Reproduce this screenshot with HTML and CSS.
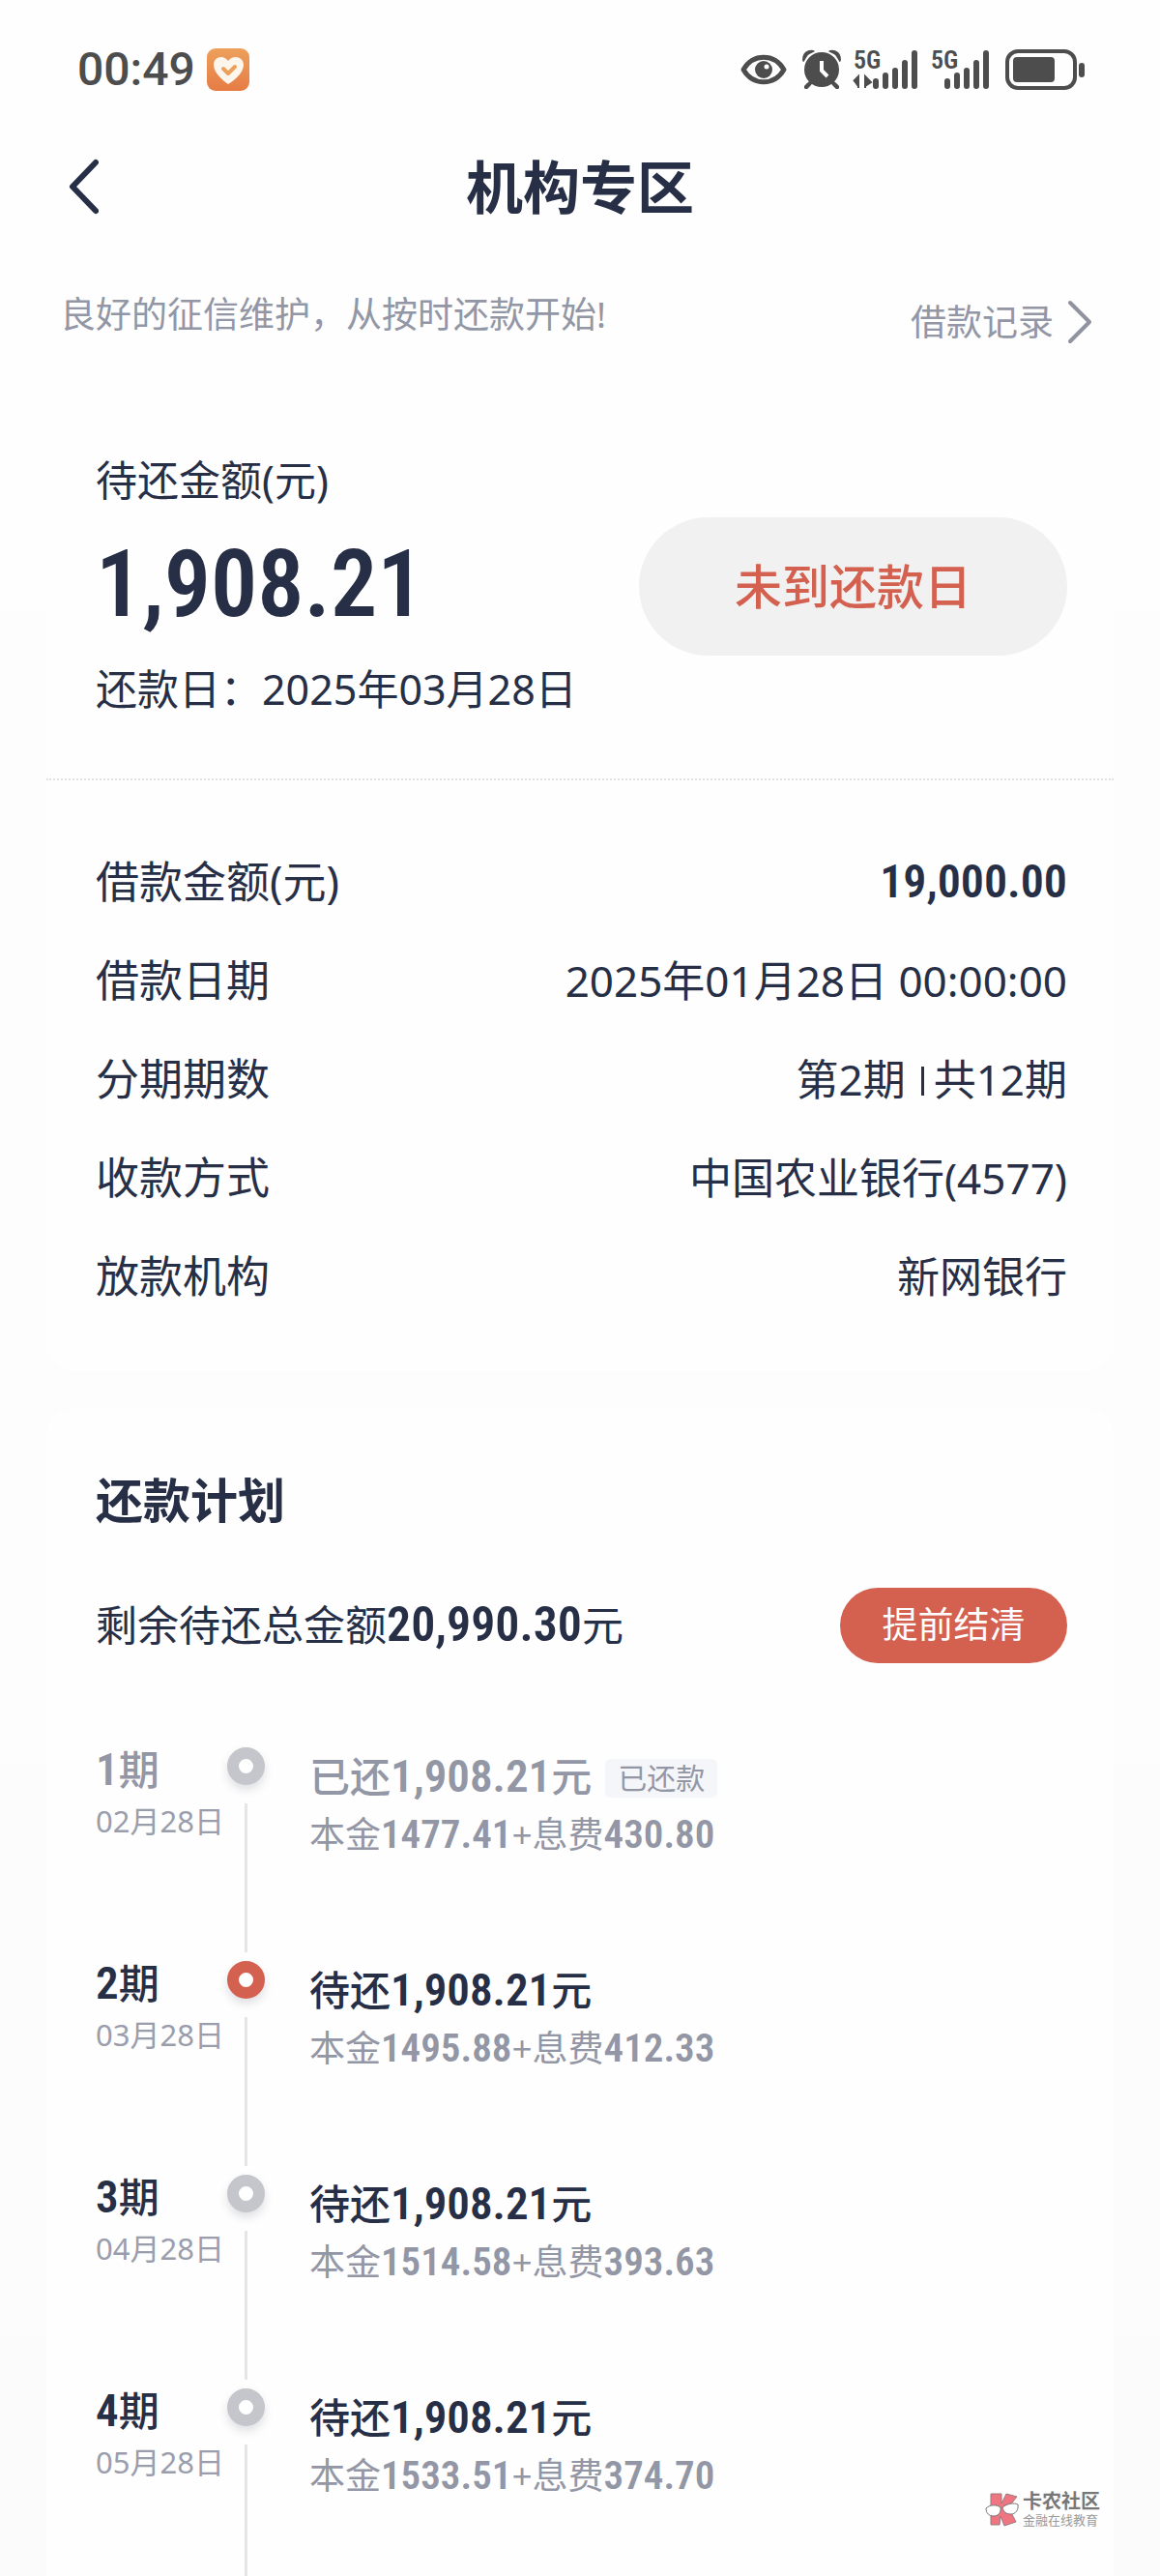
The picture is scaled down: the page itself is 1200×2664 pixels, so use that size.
FILE: index.html
```html
<!DOCTYPE html>
<html lang="zh-CN">
<head>
    <meta charset="UTF-8">
    <meta name="viewport" content="width=device-width, initial-scale=1.0">
    <title>机构专区</title>
    <link rel="stylesheet" href="styles.css">
</head>
<body>
    <div class="status-bar">
        <span class="time">00:49</span>
        <svg class="app-icon" width="44" height="44" viewBox="0 0 44 44">
            <defs>
                <linearGradient id="appBg" x1="0" y1="0" x2="0" y2="1">
                    <stop offset="0" stop-color="#eda05c"/>
                    <stop offset="1" stop-color="#e67c45"/>
                </linearGradient>
            </defs>
            <rect width="44" height="44" rx="9" fill="url(#appBg)"/>
            <path d="M22 37C18 34 7 26 7 17C7 9 17 6 22 13C27 6 38 9 38 17C38 26 27 34 22 37Z" fill="#fdf6ec"/>
            <path d="M17 21L22 26L29 19" fill="none" stroke="#eda05c" stroke-width="4" stroke-linecap="round" stroke-linejoin="round"/>
        </svg>
        <div class="status-icons">
            <svg width="48" height="32" viewBox="0 0 48 32">
                <path d="M3 16C13 -1 35 -1 45 16C35 33 13 33 3 16Z" fill="none" stroke="#4d4d4d" stroke-width="5" stroke-linejoin="round"/>
                <circle cx="24" cy="16" r="9" fill="#4d4d4d"/>
                <circle cx="27" cy="13" r="2.5" fill="#fff"/>
            </svg>
            <svg class="alarm" width="40" height="42" viewBox="0 0 40 42">
                <path d="M2 11C2 5 6 2 11 3M38 11C38 5 34 2 29 3M9 34L4 39M31 34L36 39" fill="none" stroke="#4d4d4d" stroke-width="4" stroke-linecap="round"/>
                <circle cx="20" cy="21" r="20" fill="#fff"/>
                <circle cx="20" cy="21" r="18" fill="#4d4d4d"/>
                <path d="M10 33L4 39M30 33L36 39" stroke="#4d4d4d" stroke-width="4" stroke-linecap="round"/>
                <path d="M20 12V22L26 28" fill="none" stroke="#fff" stroke-width="4"/>
            </svg>
            <svg class="signal" width="68" height="54" viewBox="0 -6 68 54">
                <text class="net" x="1" y="20">5G</text>
                <path d="M1 33L6 28V40M13 40V28L19 34L13 38" fill="#4d4d4d" stroke="#4d4d4d" stroke-width="2"/>
                <path d="M24 33V38M34 27V38M44 22V38M54 14V38M64 4V38" stroke="#4d4d4d" stroke-width="6" stroke-linecap="round"/>
            </svg>
            <svg class="signal" width="62" height="54" viewBox="0 -6 62 54">
                <text class="net" x="1" y="20">5G</text>
                <path d="M18 33V38M28 27V38M38 22V38M48 14V38M58 4V38" stroke="#4d4d4d" stroke-width="6" stroke-linecap="round"/>
            </svg>
            <svg class="battery" width="82" height="42" viewBox="0 0 82 42">
                <rect x="2" y="2" width="70" height="38" rx="11" fill="none" stroke="#4d4d4d" stroke-width="4"/>
                <rect x="8" y="8" width="43" height="26" rx="4" fill="#4d4d4d"/>
                <rect x="76" y="14" width="6" height="15" rx="3" fill="#4d4d4d"/>
            </svg>
        </div>
    </div>

    <header class="nav-bar">
        <button class="back" aria-label="返回">
            <svg width="34" height="60" viewBox="0 0 34 60">
                <path d="M31 5L7 30L31 55" fill="none" stroke="#272f47" stroke-width="6" stroke-linecap="round" stroke-linejoin="round"/>
            </svg>
        </button>
        <h1>机构专区</h1>
    </header>

    <div class="notice">
        <p>良好的征信维护，从按时还款开始!</p>
        <a href="#">借款记录
            <svg width="26" height="46" viewBox="0 0 26 46">
                <path d="M3 3L23 23L3 43" fill="none" stroke="#8f929f" stroke-width="4" stroke-linecap="round" stroke-linejoin="round"/>
            </svg>
        </a>
    </div>

    <main>
        <section class="card">
            <div class="summary">
                <div>
                    <p class="summary-label">待还金额(元)</p>
                    <p class="summary-amount num">1,908.21</p>
                    <p class="summary-date">还款日：2025年03月28日</p>
                </div>
                <button class="due-btn">未到还款日</button>
            </div>
            <dl class="details">
                <div class="row"><dt>借款金额(元)</dt><dd class="num">19,000.00</dd></div>
                <div class="row"><dt>借款日期</dt><dd>2025年01月28日 00:00:00</dd></div>
                <div class="row"><dt>分期期数</dt><dd>第2期<span class="bar"></span>共12期</dd></div>
                <div class="row"><dt>收款方式</dt><dd>中国农业银行(4577)</dd></div>
                <div class="row"><dt>放款机构</dt><dd>新网银行</dd></div>
            </dl>
        </section>

        <section class="card plan">
            <h2>还款计划</h2>
            <div class="total">
                <p>剩余待还总金额<span class="num">20,990.30</span>元</p>
                <button class="settle-btn">提前结清</button>
            </div>
            <ol class="timeline">
                <li class="paid">
                    <div class="period"><b><span class="num">1</span>期</b><time>02月28日</time></div>
                    <div class="marker"><i></i></div>
                    <div class="info">
                        <p class="amount">已还<span class="num">1,908.21</span>元<span class="tag">已还款</span></p>
                        <p class="parts">本金<span class="num">1477.41</span>+息费<span class="num">430.80</span></p>
                    </div>
                </li>
                <li class="current">
                    <div class="period"><b><span class="num">2</span>期</b><time>03月28日</time></div>
                    <div class="marker"><i></i></div>
                    <div class="info">
                        <p class="amount">待还<span class="num">1,908.21</span>元</p>
                        <p class="parts">本金<span class="num">1495.88</span>+息费<span class="num">412.33</span></p>
                    </div>
                </li>
                <li>
                    <div class="period"><b><span class="num">3</span>期</b><time>04月28日</time></div>
                    <div class="marker"><i></i></div>
                    <div class="info">
                        <p class="amount">待还<span class="num">1,908.21</span>元</p>
                        <p class="parts">本金<span class="num">1514.58</span>+息费<span class="num">393.63</span></p>
                    </div>
                </li>
                <li>
                    <div class="period"><b><span class="num">4</span>期</b><time>05月28日</time></div>
                    <div class="marker"><i></i></div>
                    <div class="info">
                        <p class="amount">待还<span class="num">1,908.21</span>元</p>
                        <p class="parts">本金<span class="num">1533.51</span>+息费<span class="num">374.70</span></p>
                    </div>
                </li>
            </ol>
        </section>
    </main>

    <div class="watermark">
        <svg width="36" height="36" viewBox="0 0 36 36">
            <path d="M6 2H17V12L22 2L33 5L24 16L32 31L20 35L16 25L15 34H6Z" fill="#ef7580" stroke="#99797c"/>
            <path d="M1 17C5 13 12 13 16 16C17 22 13 25 9 25C4 25 1 22 1 17ZM18 16C23 12 30 11 34 13C35 19 31 23 27 23C22 23 19 21 18 16Z" fill="#fff" stroke="#777"/>
        </svg>
        <div>
            <strong>卡农社区</strong>
            <small>金融在线教育</small>
        </div>
    </div>
</body>
</html>
```
FILE: styles.css
```css
* {
    box-sizing: border-box;
    margin: 0;
    padding: 0;
}
body {
    position: relative;
    display: flex;
    flex-direction: column;
    min-height: 100vh;
    font-family: "Noto Sans", "Noto Sans CJK SC", sans-serif;
    color: #272f47;
    background: linear-gradient(#fefefe 300px, #fbfbfc);
}
button {
    border: none;
    font-family: inherit;
    cursor: pointer;
}
a {
    color: inherit;
    text-decoration: none;
}
svg {
    display: block;
}
.num {
    font-family: "Roboto Condensed", Roboto, sans-serif;
    font-weight: 600;
}

/* status bar */
.status-bar {
    display: flex;
    align-items: center;
    height: 144px;
    padding: 0 78px 0 80px;
}
.time {
    font: 500 48px/56px Roboto, sans-serif;
    color: #4d4d4d;
}
.app-icon {
    margin-left: 12px;
}
.status-icons {
    display: flex;
    align-items: center;
    margin-left: auto;
}
.alarm {
    margin-left: 16px;
}
.signal {
    margin-left: 12px;
}
.battery {
    margin-left: 16px;
}
.net {
    font: 600 26px "Roboto Condensed", Roboto, sans-serif;
    fill: #4d4d4d;
}

/* title bar */
.nav-bar {
    display: grid;
    grid-template-columns: 1fr auto 1fr;
    align-items: center;
    height: 98px;
    padding: 0 68px;
}
.back {
    justify-self: start;
    background: none;
}
h1 {
    font-size: 59px;
    line-height: 98px;
}
.notice {
    display: flex;
    justify-content: space-between;
    padding: 55px 70px 53px 62px;
    font-size: 37px;
    line-height: 56px;
    color: #9296a5;
}
.notice a {
    display: flex;
    align-items: center;
    gap: 14px;
    height: 72px;
}

main {
    display: flex;
    flex: 1;
    flex-direction: column;
    gap: 39px;
    padding: 0 48px;
}
.card {
    background: #fefefe;
    border-radius: 28px;
}

/* amount due */
.summary {
    display: flex;
    justify-content: space-between;
    align-items: center;
    padding: 42px 48px 57px 51px;
    border-bottom: 2px dotted #e0e0e2;
}
.summary-label {
    font-size: 43px;
    line-height: 66px;
}
.summary-amount {
    font-size: 96px;
    line-height: 148px;
}
.summary-date {
    font-size: 43px;
    line-height: 70px;
}
.due-btn {
    width: 443px;
    height: 143px;
    padding-bottom: 6px;
    border-radius: 72px;
    font-size: 49px;
    font-weight: 500;
    color: #d4614f;
    background: #f1f1f1;
}

.details {
    padding: 54px 48px 47px 51px;
}
.row {
    display: flex;
    justify-content: space-between;
    line-height: 102px;
}
.row dt {
    font-size: 45px;
}
.row dd {
    font-size: 44px;
}
.row .num {
    font-size: 48px;
}
.bar {
    display: inline-block;
    width: 3px;
    height: 30px;
    margin: 0 10px 0 16px;
    background: #272f47;
}

/* repayment plan */
.plan {
    display: flex;
    flex: 1;
    flex-direction: column;
    padding: 58px 48px 0 51px;
    border-radius: 28px 28px 0 0;
}
h2 {
    font-size: 49px;
    font-weight: 700;
    line-height: 72px;
}
.total {
    display: flex;
    justify-content: space-between;
    align-items: center;
    margin-top: 55px;
    font-size: 43px;
    line-height: 72px;
}
.total p {
    padding-bottom: 2px;
}
.total .num {
    font-size: 50px;
}
.settle-btn {
    width: 235px;
    height: 78px;
    padding-bottom: 6px;
    border-radius: 39px;
    font-size: 37px;
    color: #fff;
    background: #d4604f;
}
.timeline {
    display: flex;
    flex: 1;
    flex-direction: column;
    margin-top: 87px;
    list-style: none;
}
.timeline li {
    display: grid;
    grid-template-columns: 136px 39px 1fr;
    height: 221px;
}
.timeline li:last-child {
    flex: 1;
    height: auto;
}
.period b {
    display: block;
    font-size: 42px;
    font-weight: 500;
    line-height: 46px;
}
.period .num,
.amount .num {
    font-size: 47px;
    line-height: 46px;
}
.period time {
    display: block;
    font-size: 31px;
    line-height: 60px;
    color: #9a9dab;
    white-space: nowrap;
}
.marker {
    display: flex;
    flex-direction: column;
    align-items: center;
}
.marker i {
    width: 39px;
    height: 39px;
    border: 12px solid #c4c6cc;
    border-radius: 50%;
    background: #fff;
    box-shadow: 0 5px 10px rgba(39, 47, 71, 0.15);
}
.marker::after {
    content: "";
    flex: 1;
    width: 3px;
    margin: 19px 0 9px;
    background: #e4e5e9;
}
.timeline li:last-child .marker::after {
    margin-bottom: 0;
}
.current .marker i {
    border-color: #d4604f;
}
.info {
    padding-left: 46px;
}
.amount {
    display: flex;
    align-items: center;
    font-size: 42px;
    font-weight: 500;
    line-height: 60px;
}
.parts {
    font-size: 37px;
    line-height: 60px;
    color: #9296a5;
}
.parts .num {
    font-size: 41px;
    line-height: 46px;
}
.tag {
    margin: 4px 0 0 14px;
    padding: 0 13px;
    border-radius: 6px;
    font-size: 30px;
    font-weight: 400;
    line-height: 40px;
    background: #f5f6f9;
}
.paid {
    color: #9296a5;
}

/* sits over the end of the list */
.watermark {
    position: absolute;
    right: 62px;
    bottom: 50px;
    display: flex;
    align-items: center;
    gap: 3px;
    color: #777;
}
.watermark strong,
.watermark small {
    display: block;
    font-size: 20px;
    line-height: 22px;
}
.watermark small {
    font-size: 13px;
    line-height: 16px;
    color: #999;
}
```
